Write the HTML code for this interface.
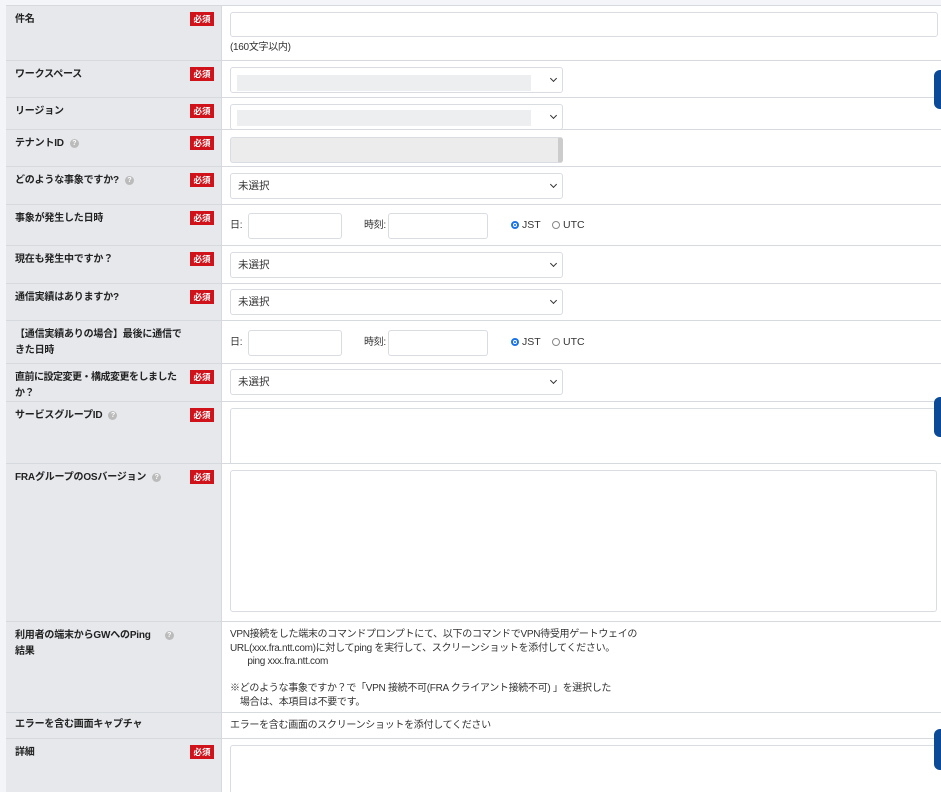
<!DOCTYPE html>
<html><head><meta charset="utf-8"><style>
*{box-sizing:border-box;margin:0;padding:0}
html{height:792px;overflow:hidden}
body{width:941px;height:792px;overflow:hidden;background:#f4f5f8;font-family:"Liberation Sans","Noto Sans CJK JP",sans-serif;font-size:11px;color:#333;position:relative}
.row{position:absolute;left:6px;width:940px;border-top:1px solid #d6d9de;background:#fff}
.lab{position:absolute;left:0;top:0;bottom:0;width:216px;background:#e6e8ec;border-right:1px solid #d6d9de;padding:6px 9px;font-weight:bold;font-size:10px;line-height:16px;color:#222;letter-spacing:-0.2px}
.req{position:absolute;left:184px;top:6px;width:24px;height:14px;background:#d0121b;color:#fff;font-size:8.5px;font-weight:bold;text-align:center;line-height:14px;letter-spacing:0}
.q{display:inline-block;width:9px;height:9px;border-radius:50%;background:#bbb;color:#fff;font-size:7px;line-height:9px;text-align:center;margin-left:6px;vertical-align:1px}
.in{position:absolute;border:1px solid #d9dce1;border-radius:3px;background:#fff}
.sel{position:absolute;left:224px;width:333px;height:26px;border:1px solid #d9dce1;border-radius:3px;background:#fff;padding:4px 7px;font-size:10.5px;line-height:16px}
.sel.c:after{content:"";position:absolute;right:6px;top:8px;width:4px;height:4px;border-right:1.5px solid #333;border-bottom:1.5px solid #333;transform:rotate(45deg)}
.gray{position:absolute;left:6px;top:7px;width:294px;height:16px;background:#eceef0}
.txt{position:absolute;left:224px;font-size:10px;line-height:13.5px;color:#333;letter-spacing:-0.3px}
.rad{position:absolute;font-size:10.5px}
.rad i{display:inline-block;width:8px;height:8px;border-radius:50%;border:1px solid #888;margin-right:3px;vertical-align:-1px}
.rad i.on{border:2px solid #1a73e8;background:radial-gradient(#1a73e8 30%,#fff 40%)}
.tab{position:absolute;left:934px;width:10px;background:#0b4a96;border-radius:6px 0 0 6px}
</style></head><body>
<div class="row" style="top:5px;height:55px"><div class="lab">件名<span class="req">必須</span></div>
<div class="in" style="left:224px;top:6px;width:708px;height:25px"></div><div class="txt" style="top:35px;font-size:10px">(160文字以内)</div></div>
<div class="row" style="top:60px;height:37px"><div class="lab">ワークスペース<span class="req">必須</span></div><div class="sel c" style="top:6px"><div class="gray"></div></div></div>
<div class="row" style="top:97px;height:32px"><div class="lab">リージョン<span class="req">必須</span></div><div class="sel c" style="top:6px"><div class="gray" style="top:5px"></div></div></div>
<div class="row" style="top:129px;height:37px"><div class="lab">テナントID<span class="q">?</span><span class="req">必須</span></div><div class="sel" style="top:7px;background:#ececec;border-right:5px solid #ccc"></div></div>
<div class="row" style="top:166px;height:38px"><div class="lab">どのような事象ですか?<span class="q">?</span><span class="req">必須</span></div><div class="sel c" style="top:6px">未選択</div></div>
<div class="row" style="top:204px;height:41px"><div class="lab">事象が発生した日時<span class="req">必須</span></div>
<div class="txt" style="top:14px">日:</div><div class="in" style="left:242px;top:8px;width:94px;height:26px"></div>
<div class="txt" style="left:358px;top:14px">時刻:</div><div class="in" style="left:382px;top:8px;width:100px;height:26px"></div>
<div class="rad" style="left:505px;top:14px"><i class="on"></i>JST</div><div class="rad" style="left:546px;top:14px"><i></i>UTC</div></div>
<div class="row" style="top:245px;height:38px"><div class="lab">現在も発生中ですか？<span class="req">必須</span></div><div class="sel c" style="top:6px">未選択</div></div>
<div class="row" style="top:283px;height:37px"><div class="lab">通信実績はありますか?<span class="req">必須</span></div><div class="sel c" style="top:5px">未選択</div></div>
<div class="row" style="top:320px;height:43px"><div class="lab">【通信実績ありの場合】最後に通信で<br>きた日時</div>
<div class="txt" style="top:15px">日:</div><div class="in" style="left:242px;top:9px;width:94px;height:26px"></div>
<div class="txt" style="left:358px;top:15px">時刻:</div><div class="in" style="left:382px;top:9px;width:100px;height:26px"></div>
<div class="rad" style="left:505px;top:15px"><i class="on"></i>JST</div><div class="rad" style="left:546px;top:15px"><i></i>UTC</div></div>
<div class="row" style="top:363px;height:38px"><div class="lab" style="letter-spacing:-0.5px">直前に設定変更・構成変更をしました<br>か？<span class="req">必須</span></div><div class="sel c" style="top:5px">未選択</div></div>
<div class="row" style="top:401px;height:62px"><div class="lab">サービスグループID<span class="q">?</span><span class="req">必須</span></div><div class="in" style="left:224px;top:6px;width:716px;height:60px;border-radius:3px 0 0 0"></div></div>
<div class="row" style="top:463px;height:158px"><div class="lab">FRAグループのOSバージョン<span class="q">?</span><span class="req">必須</span></div><div class="in" style="left:224px;top:6px;width:707px;height:142px"></div></div>
<div class="row" style="top:621px;height:91px"><div class="lab">利用者の端末からGWへのPing<span class="q" style="margin-left:14px">?</span><br>結果</div>
<div class="txt" style="top:6px">VPN接続をした端末のコマンドプロンプトにて、以下のコマンドでVPN待受用ゲートウェイの<br>URL(xxx.fra.ntt.com)に対してping を実行して、スクリーンショットを添付してください。<br>&nbsp;&nbsp;&nbsp;&nbsp;&nbsp;&nbsp;&nbsp;ping xxx.fra.ntt.com<br><br>※どのような事象ですか？で「VPN 接続不可(FRA クライアント接続不可) 」を選択した<br>&nbsp;&nbsp;&nbsp;&nbsp;場合は、本項目は不要です。</div></div>
<div class="row" style="top:712px;height:26px"><div class="lab" style="padding-top:4px">エラーを含む画面キャプチャ</div><div class="txt" style="top:6px">エラーを含む画面のスクリーンショットを添付してください</div></div>
<div class="row" style="top:738px;height:54px"><div class="lab">詳細<span class="req">必須</span></div><div class="in" style="left:224px;top:6px;width:716px;height:60px"></div></div>
<div class="tab" style="top:70px;height:39px"></div>
<div class="tab" style="top:397px;height:40px"></div>
<div class="tab" style="top:729px;height:41px"></div>
</body></html>
